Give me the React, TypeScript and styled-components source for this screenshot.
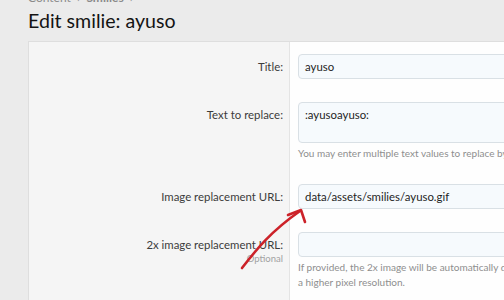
import styled, { createGlobalStyle } from "styled-components";

const GlobalStyle = createGlobalStyle`
  html, body {
    margin: 0;
    padding: 0;
    background: #ebebeb;
    overflow: hidden;
  }
  body {
    font-family: Lato, "Noto Sans", sans-serif;
    color: #141414;
  }
`;

type Row = {
  label: string;
  optional?: boolean;
  value: string;
  multiline?: boolean;
  hint?: string[];
};

const rows: Row[] = [
  { label: "Title:", value: "ayuso" },
  {
    label: "Text to replace:",
    value: ":ayusoayuso:",
    multiline: true,
    hint: ["You may enter multiple text values to replace by putting each on its own line."],
  },
  { label: "Image replacement URL:", value: "data/assets/smilies/ayuso.gif" },
  {
    label: "2x image replacement URL:",
    optional: true,
    value: "",
    hint: [
      "If provided, the 2x image will be automatically displayed instead of the 1x image on devices with",
      "a higher pixel resolution.",
    ],
  },
];

export default function App() {
  return (
    <>
      <GlobalStyle />
      <Page>
        <Crumbs>
          Content <Sep>›</Sep> <b>Smilies</b> <Sep>›</Sep>
        </Crumbs>
        <Title>Edit smilie: ayuso</Title>
        <Card>
          {rows.map((row) => (
            <FormRow key={row.label}>
              <LabelCell>
                <Label>{row.label}</Label>
                {row.optional && <Optional>Optional</Optional>}
              </LabelCell>
              <ValueCell>
                <Field $tall={row.multiline}>{row.value}</Field>
                {row.hint && (
                  <Hint>
                    {row.hint.map((line) => (
                      <div key={line}>{line}</div>
                    ))}
                  </Hint>
                )}
              </ValueCell>
            </FormRow>
          ))}
        </Card>
      </Page>
      {/* hand-drawn annotation arrow */}
      <Arrow width="504" height="300" viewBox="0 0 504 300">
        <path
          d="M242 268 C 256 250, 270 232, 300 211"
          fill="none"
          stroke="#cc2229"
          strokeWidth="2.6"
          strokeLinecap="round"
        />
        <path
          d="M288 215 L301 210 L305 222"
          fill="none"
          stroke="#cc2229"
          strokeWidth="2.6"
          strokeLinecap="round"
          strokeLinejoin="round"
        />
      </Arrow>
    </>
  );
}

const Page = styled.div`
  padding: 0 0 0 28px;
  margin-top: -9px;
`;

const Crumbs = styled.div`
  font-size: 12px;
  line-height: 14px;
  color: #8a8a8a;
  b {
    font-weight: bold;
  }
`;

const Sep = styled.span`
  padding: 0 3px;
`;

const Title = styled.h1`
  margin: 3px 0 0;
  font-size: 19.6px;
  font-weight: normal;
  line-height: 26px;
  color: #141414;
`;

const Card = styled.div`
  margin-top: 7px;
  width: 620px;
  background: #fefefe;
  border: 1px solid #dedede;
  border-right: none;
  border-bottom: none;
`;

const FormRow = styled.div`
  display: grid;
  grid-template-columns: 261px 1fr;
`;

const LabelCell = styled.div`
  background: #f5f5f5;
  border-right: 1px solid #e4e4e4;
  padding: 17px 6px 0 0;
  text-align: right;
  display: flex;
  flex-direction: column;
  align-items: flex-end;
`;

const Label = styled.div`
  font-size: 11.4px;
  line-height: 16px;
  color: #3c3c3c;
`;

const Optional = styled.div`
  font-size: 9.5px;
  line-height: 11px;
  color: #a2a2a2;
`;

const ValueCell = styled.div`
  padding: 12px 0 11px 8px;
`;

const Field = styled.div<{ $tall?: boolean }>`
  box-sizing: border-box;
  height: ${(p) => (p.$tall ? "41px" : "25px")};
  border: 1px solid #d9e0e5;
  border-radius: 4px;
  background: #f6fafd;
  padding: ${(p) => (p.$tall ? "4px 6px" : "0 6px")};
  font-size: 11.4px;
  line-height: ${(p) => (p.$tall ? "16px" : "23px")};
  color: #1e1e1e;
`;

const Hint = styled.div`
  margin-top: 3px;
  font-size: 10px;
  line-height: 15px;
  color: #8e8e8e;
  white-space: nowrap;
`;

const Arrow = styled.svg`
  position: absolute;
  left: 0;
  top: 0;
  pointer-events: none;
`;
